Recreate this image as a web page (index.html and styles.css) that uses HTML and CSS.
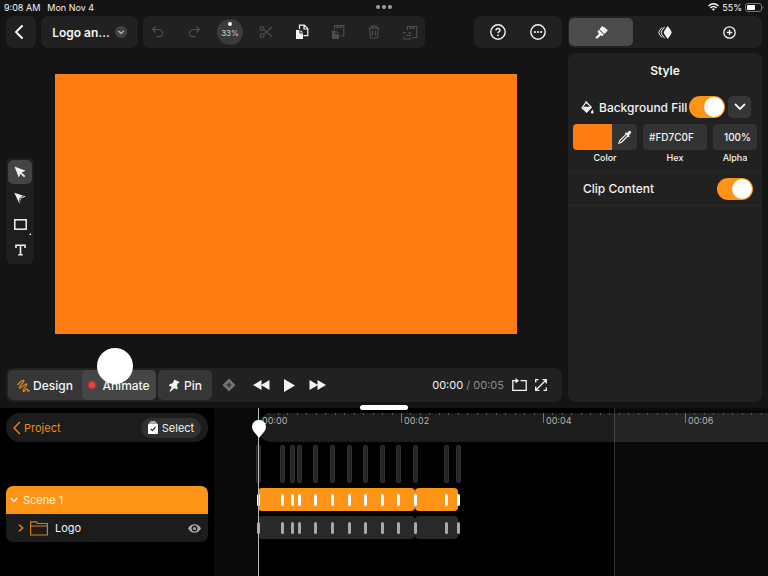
FILE: index.html
```html
<!DOCTYPE html>
<html lang="en">
<head>
  <meta charset="UTF-8" />
  <meta name="viewport" content="width=device-width, initial-scale=1.0"/>
  <title>Logo animation</title>

  <link rel="stylesheet" href="styles.css">
</head>
<body>

  <!-- Status bar -->
  <header class="status-bar">
    <div class="status-left"><span>9:08 AM</span><span>Mon Nov 4</span></div>
    <div class="dots"><i></i><i></i><i></i></div>
    <div class="status-right">
      <svg width="11" height="8" viewBox="0 0 11 8" fill="none" stroke="#fff" stroke-width="1.4">
        <path d="M.6 3Q5.500-1.400 10.400 3M2.400 5Q5.500 2.200 8.600 5"/>
        <path d="M5.500 7.800L3.900 6.100Q5.500 5 7.100 6.100Z" fill="#fff" stroke="none"/>
      </svg>
      <span>55%</span>
      <svg width="19" height="9" viewBox="0 0 19 9">
        <rect x=".5" y=".5" width="16" height="8" rx="2.500" fill="none" stroke="#77777a"/>
        <rect x="2" y="2" width="8" height="5" rx="1" fill="#fff"/>
        <path d="M17.600 3.200v2.800q1-.4 1-1.400t-1-1.400" fill="#77777a"/>
      </svg>
    </div>
  </header>

  <main class="editor">
    <section class="workspace">

      <!-- Toolbar -->
      <div class="toolbar">
        <button class="group back" aria-label="Back">
          <svg width="10" height="16" viewBox="0 0 10 16"><path d="M8 2L2 8l6 6" stroke-width="2" stroke-linecap="round" stroke-linejoin="round"/></svg>
        </button>
        <button class="group doc-title">
          <span>Logo an...</span>
          <svg width="12" height="12" viewBox="0 0 12 12"><circle cx="6" cy="6" r="6" fill="#434343" stroke="none"/><path d="M3.400 5L6 7.500 8.600 5" stroke="#bbb"/></svg>
        </button>
        <div class="group tools">
          <button class="dim" aria-label="Undo">
            <svg width="14" height="14" viewBox="0 0 14 14"><path d="M4.500 1.500L1.500 4.500l3 3M1.800 4.500H8a3.600 3.600 0 0 1 0 7.200H5.500"/></svg>
          </button>
          <button class="dim" aria-label="Redo">
            <svg width="14" height="14" viewBox="0 0 14 14"><path d="M9.500 1.500l3 3-3 3M12.200 4.500H6a3.600 3.600 0 0 0 0 7.200h2.500"/></svg>
          </button>
          <button class="zoom" aria-label="Zoom 33%"><i></i><span>33%</span></button>
          <button class="dim" aria-label="Cut">
            <svg width="14" height="14" viewBox="0 0 14 14"><circle cx="3" cy="3.500" r="1.900"/><circle cx="3" cy="10.500" r="1.900"/><path d="M4.600 4.600L12.800 11.500M4.600 9.400L12.800 2"/></svg>
          </button>
          <button aria-label="Copy">
            <svg width="14" height="16" viewBox="0 0 14 16"><path d="M4.500 5V1.200h4.800l3.500 3.500v7H8.500M9 1.500V5h3.500"/><path d="M1 6h3.500v3.500H8V15H1zM5.500 6L8 8.500H5.500z" fill="currentColor" stroke="none"/></svg>
          </button>
          <button class="dim" aria-label="Paste">
            <svg width="14" height="16" viewBox="0 0 14 16"><path d="M3.500 5V1.700h9.300V12H9M6 1.700v1.800h4V1.700"/><path d="M1 6.500h3.500V10H8v5H1zM5.500 6.500L8 9H5.500z" fill="currentColor" stroke="none"/></svg>
          </button>
          <button class="dim" aria-label="Delete">
            <svg width="12" height="14" viewBox="0 0 12 14"><path d="M.5 3.200h11M3.800 3V1.200h4.400V3M1.800 3.500l.7 9.500h7l.7-9.500M4.500 5.500v5.300M7.500 5.500v5.300"/></svg>
          </button>
          <button class="dim" aria-label="Paste in place">
            <svg width="15" height="15" viewBox="0 0 15 15"><path d="M4.500 5V1.500h9.300v11H9M7 1.500v1.800h4V1.500M1 9V7.500h1.500M5.500 7.500h1.500V10M1 11.500v2.500h6v-1.500M3 10.500h5"/></svg>
          </button>
        </div>
        <div class="group help">
          <button aria-label="Help">
            <svg width="16" height="16" viewBox="0 0 16 16"><circle cx="8" cy="8" r="7.200" stroke-width="1.400"/><path d="M6 6.500Q6 4.500 8 4.500t2 1.800Q10 7.200 8.800 7.800 8 8.300 8 9.300" stroke-width="1.400"/><circle cx="8" cy="11.300" r=".9" fill="currentColor" stroke="none"/></svg>
          </button>
          <button aria-label="More">
            <svg width="16" height="16" viewBox="0 0 16 16"><circle cx="8" cy="8" r="7.200" stroke-width="1.400"/><g fill="currentColor" stroke="none"><circle cx="4.900" cy="8" r="1.100"/><circle cx="8" cy="8" r="1.100"/><circle cx="11.100" cy="8" r="1.100"/></g></svg>
          </button>
        </div>
      </div>

      <!-- Canvas and drawing tools -->
      <div class="stage">
        <div class="palette">
          <button class="active" aria-label="Select">
            <svg width="12" height="12" viewBox="0 0 12 12"><path d="M.5.5l11 4.300-4 1.700L11.300 10 10 11.300 6.500 7.700 4.800 11.500z" fill="currentColor" stroke="none"/></svg>
          </button>
          <button aria-label="Edit points">
            <svg width="12" height="12" viewBox="0 0 12 12"><path d="M.3.700l11.400 3.800-4.700 2-1.700 5z" fill="currentColor" stroke="none"/><path d="M5.300 10Q4.800 5.500 10.500 3.500" stroke="#1e1e1e" stroke-width=".8"/></svg>
          </button>
          <button class="shape" aria-label="Rectangle">
            <svg width="13" height="11" viewBox="0 0 13 11"><rect x=".8" y=".8" width="11.400" height="9.400" stroke-width="1.500"/></svg>
          </button>
          <button aria-label="Text">
            <svg width="11" height="12" viewBox="0 0 11 12"><path d="M1 4V1.200h9V4M5.500 1.200v9.600M3.300 10.800h4.400" stroke-width="1.600"/></svg>
          </button>
        </div>
        <div class="canvas"></div>
      </div>

      <!-- Playback -->
      <div class="group playback">
        <div class="modes">
          <button class="mode">
            <svg width="13" height="13" viewBox="0 0 13 13"><path d="M.8 5.500C3 3 6 .6 6.800 1.500 7.800 2.700 1.500 7.500 2.500 9c1 1.300 5.800-5 7.200-4 1.300 1.200-4.700 5.500-3.600 7 .9 1.200 3-2.500 4.300-2 .9.400-.2 2 .6 2.200.5.100.9-.3 1.200-.7" stroke="#d8871d" stroke-width="1.300" stroke-linecap="round" stroke-linejoin="round"/></svg>
            Design
          </button>
          <button class="mode active"><i class="record"></i>Animate<span class="touch"></span></button>
        </div>
        <button class="mode pin">
          <svg width="12" height="13" viewBox="0 0 12 13"><path d="M6.300.500l5.200 2.600-.6 1.100-.9-.3-1.100 2.600q1.500 1.800.3 4L6.300 9.300 2.300 12.800l-.8-.6 2.400-4.200L.7 6.500q1.400-2.200 3.500-2L5.900 1.800z" fill="currentColor" stroke="none"/></svg>
          Pin
        </button>
        <button class="key" aria-label="Add keyframe">
          <svg width="14" height="14" viewBox="0 0 14 14"><path d="M7 .5L13.500 7 7 13.500.5 7z" fill="#747474" stroke="none"/><path d="M7 4.500v5M4.500 7h5" stroke="#222"/></svg>
        </button>
        <button class="rewind" aria-label="Rewind"><svg width="17" height="10" viewBox="0 0 17 10"><path d="M8.500 0v10L0 5zM16.500 0v10L8 5z" fill="currentColor" stroke="none"/></svg></button>
        <button class="play" aria-label="Play"><svg width="11" height="13" viewBox="0 0 11 13"><path d="M0 0l11 6.500L0 13z" fill="currentColor" stroke="none"/></svg></button>
        <button class="forward" aria-label="Forward"><svg width="17" height="10" viewBox="0 0 17 10"><path d="M.5 0v10L9 5zM8.500 0v10L17 5z" fill="currentColor" stroke="none"/></svg></button>
        <div class="time">00:00 <span>/ 00:05</span></div>
        <button class="loop" aria-label="Loop"><svg width="15" height="14" viewBox="0 0 15 14"><path d="M4.500 2.700H.8v9.600h13.400V2.700H8.500" stroke-width="1.300"/><path d="M3.500 0L7 2.700 3.500 5.400z" fill="currentColor" stroke="none"/></svg></button>
        <button class="expand" aria-label="Full screen"><svg width="12" height="12" viewBox="0 0 12 12"><path d="M7.500.7h3.800v3.800M11.300.7L.7 11.300M.7 7.500v3.800h3.800M.7 3.500V.7h2.800M11.300 8.500v2.800H8.500" stroke-width="1.300"/></svg></button>
      </div>
    </section>

    <!-- Inspector -->
    <aside class="sidebar">
      <div class="group tabs">
        <button class="active" aria-label="Style">
          <svg width="13" height="13" viewBox="0 0 13 13"><path d="M7.200 0l1.500 1.600 1-.4L12.800 4.500 9.300 8 4.500 3.200zM3.800 3.800l5 5-1.200 1.300-1.800-.8-3.300 3.200q-1.600.5-2-1.200L4 7.700 2.500 5.800z" fill="currentColor" stroke="none"/></svg>
        </button>
        <button aria-label="Motion">
          <svg width="14" height="13" viewBox="0 0 14 13"><path d="M9.700 0q3.300 3.800 4 6.500-.7 2.700-4 6.500-3.200-3.800-3.900-6.500.7-2.700 3.900-6.500z" fill="currentColor" stroke="none"/><path d="M6.700.8Q3.300 4.500 3.200 6.500t3.500 5.700M4 1.500Q.9 4.700.8 6.500T4 11.500" stroke-width="1"/></svg>
        </button>
        <button aria-label="Add">
          <svg width="13" height="13" viewBox="0 0 13 13"><circle cx="6.500" cy="6.500" r="5.700" stroke-width="1.300"/><path d="M6.500 3.800v5.400M3.800 6.500h5.400" stroke-width="1.300"/></svg>
        </button>
      </div>

      <div class="panel">
        <h1>Style</h1>
        <div class="fill">
          <div class="fill-head">
            <svg width="13" height="13" viewBox="0 0 13 13"><path d="M5.200 1L1 6.800l4.700 4.300 4.600-4.800zM2.600 6.300h7M4.500.500L7 3"/><path d="M1.600 6.500h8.300l-4.200 4.300zM11.300 8.500q2 2.700.9 3.700-1.100.7-1.900 0-.9-1 1-3.700z" fill="currentColor" stroke="none"/></svg>
            <label for="fill">Background Fill</label>
            <input type="checkbox" class="switch" id="fill" checked>
            <button class="more" aria-label="Fill options">
              <svg width="12" height="8" viewBox="0 0 12 8"><path d="M1.500 1.500L6 6l4.500-4.500" stroke-width="1.800" stroke-linecap="round"/></svg>
            </button>
          </div>
          <div class="fields">
            <div class="field">
              <div class="color-box">
                <button class="swatch" id="color" aria-label="Color"></button>
                <button class="dropper" aria-label="Pick color">
                  <svg width="14" height="14" viewBox="0 0 14 14"><path d="M8 4.300L1.800 10.500l-.8 2.500 2.500-.8L9.700 6"/><path d="M6.800 3.300l1-1 1 .9L11 1q1-.6 1.700.3.800.8.300 1.700L10.800 5.200l.9 1-1 1z" fill="currentColor" stroke="none"/></svg>
                </button>
              </div>
              <label for="color">Color</label>
            </div>
            <div class="field">
              <input type="text" id="hex" value="#FD7C0F">
              <label for="hex">Hex</label>
            </div>
            <div class="field">
              <input type="text" class="alpha" id="alpha" value="100%">
              <label for="alpha">Alpha</label>
            </div>
          </div>
        </div>
        <div class="clip">
          <label for="clip">Clip Content</label>
          <input type="checkbox" class="switch" id="clip" checked>
        </div>
      </div>
    </aside>
  </main>

  <!-- Timeline -->
  <section class="timeline">
    <span class="handle"></span>
    <div class="layers">
      <div class="layers-head">
        <a href="#">
          <svg width="8" height="14" viewBox="0 0 8 14" fill="none" stroke="currentColor" stroke-width="1.300"><path d="M7 1L1 7l6 6"/></svg>
          Project
        </a>
        <button class="select">
          <svg width="10" height="13" viewBox="0 0 10 13"><path d="M2.500 0h5v1.500h1.700V3H.8V1.500h1.700z" fill="#aaa" stroke="none"/><rect y="3" width="10" height="10" rx="1" fill="#fff" stroke="none"/><path d="M2.800 8l1.700 1.700L7.500 6" stroke="#333"/></svg>
          Select
        </button>
      </div>
      <ul class="layer-list">
        <li class="scene">
          <svg width="8" height="6" viewBox="0 0 8 6" fill="none" stroke="#fff" stroke-width="1.200"><path d="M.8 1L4 4.500 7.200 1"/></svg>
          Scene 1
        </li>
        <li class="layer">
          <svg width="6" height="8" viewBox="0 0 6 8" fill="none" stroke="#f79518" stroke-width="1.200"><path d="M1 .8L4.800 4 1 7.200"/></svg>
          <svg width="18" height="15" viewBox="0 0 18 15" fill="none" stroke="#d27f18" stroke-width="1.200"><path d="M.6 14V.8h5.600l1.500 1.700h9.700V14zM.6 5h16.800"/></svg>
          <span>Logo</span>
          <svg class="eye" width="13" height="9" viewBox="0 0 13 9"><path d="M0 4.500Q2.500.3 6.500.3T13 4.500Q10.500 8.700 6.500 8.700T0 4.500z" fill="#a8a8aa"/><circle cx="6.500" cy="4.500" r="2.900" fill="#1c1c1c"/><circle cx="6.500" cy="4.500" r="1.600" fill="#a8a8aa"/></svg>
        </li>
      </ul>
    </div>

    <div class="tracks">
      <div class="past-end"></div>
      <div class="ruler" id="ruler"></div>
      <div class="row guides"></div>
      <div class="row clips scene-clips"><span class="clip-long"></span><span class="clip-short"></span></div>
      <div class="row clips layer-clips"><span class="clip-long"></span><span class="clip-short"></span></div>
      <div class="playhead">
        <svg width="14" height="18" viewBox="0 0 14 18"><path d="M7 18L1.700 11.500A7 7 0 1 1 12.300 11.500z" fill="#fff"/></svg>
      </div>
    </div>
  </section>

  <script src="script.js"></script>
</body>
</html>
```

FILE: styles.css
```css
/* Reset & Base */
* {
  margin: 0;
  padding: 0;
  box-sizing: border-box;
}

body {
  display: flex;
  flex-direction: column;
  min-height: 100vh;
  font-family: Inter, "Liberation Sans", sans-serif;
  font-size: 12px;
  background-color: #141414;
  color: #f4f4f4;
  overflow: hidden;
}

button,
input {
  font: inherit;
  color: inherit;
  border: none;
  background: none;
}

button {
  display: flex;
  align-items: center;
  justify-content: center;
  cursor: pointer;
}

svg {
  display: block;
  flex: none;
}

button svg,
.fill-head svg {
  fill: none;
  stroke: currentColor;
  stroke-width: 1.2;
}

/* Status bar */
.status-bar {
  display: grid;
  grid-template-columns: 1fr auto 1fr;
  align-items: center;
  height: 16px;
  padding: 0 4px 2px;
  font-size: 9px;
}

.status-left {
  display: flex;
  gap: 7px;
}

.status-right {
  display: flex;
  justify-content: flex-end;
  align-items: center;
  gap: 3px;
}

.dots {
  display: flex;
  gap: 2px;
}

.dots i {
  width: 4px;
  height: 4px;
  border-radius: 50%;
  background-color: #a0a0a0;
}

/* Editor */
.editor {
  flex: 1;
  display: grid;
  grid-template-columns: minmax(0, 1fr) 194px;
  gap: 6px;
  padding: 0 6px 6px;
}

.workspace,
.sidebar {
  display: flex;
  flex-direction: column;
}

.group {
  background-color: #212121;
  border-radius: 7px;
}

.toolbar {
  display: flex;
  gap: 5px;
  height: 32px;
}

.back {
  width: 30px;
  padding-right: 4px;
}

.doc-title {
  width: 97px;
  gap: 5px;
  font-weight: 600;
}

.tools {
  display: flex;
  align-items: center;
  gap: 10px;
  padding: 0 2px;
}

.tools button {
  width: 26px;
  height: 26px;
}

.dim {
  color: #4d4d4d;
}

.zoom {
  flex-direction: column;
  gap: 2px;
  font-size: 8px;
  line-height: 10px;
  border-radius: 50%;
  background-color: #3b3b3b;
}

.tools .zoom {
  padding-bottom: 4px;
}

.zoom i {
  width: 4px;
  height: 4px;
  border-radius: 50%;
  background-color: #fff;
}

.zoom span {
  color: #d0d0d0;
}

.help {
  display: flex;
  margin-left: auto;
  padding: 0 4px;
}

.help button {
  width: 40px;
}

/* Stage */
.stage {
  flex: 1;
  display: flex;
  align-items: center;
  gap: 21px;
  padding: 26px 45px 34px 0;
}

.palette {
  margin-top: 14px;
  padding: 2px;
  border-radius: 6px;
  background-color: #1e1e1e;
}

.palette button {
  position: relative;
  width: 24px;
  height: 24px;
  margin-bottom: 2px;
  border-radius: 5px;
}

.palette button:last-child {
  margin-bottom: 0;
}

.palette .active {
  background-color: #444;
}

.shape::after {
  content: "";
  position: absolute;
  right: 1px;
  bottom: 1px;
  border: 1px solid #fff;
  border-top-color: transparent;
  border-left-color: transparent;
}

.canvas {
  flex: 1;
  aspect-ratio: 462 / 260;
  background-color: #ff7d10;
}

/* Playback */
.playback {
  display: flex;
  align-items: center;
  height: 34px;
  padding: 2px 15px 2px 2px;
}

.modes {
  display: flex;
  border-radius: 5px;
  background-color: #363636;
}

.mode {
  position: relative;
  width: 74px;
  height: 30px;
  gap: 3px;
  border-radius: 5px;
  font-weight: 500;
}

.mode.active {
  background-color: #464646;
}

.record {
  width: 8px;
  height: 8px;
  margin-right: 3px;
  border-radius: 50%;
  background: radial-gradient(#f2403e 35%, #a03a39 70%);
  box-shadow: 0 0 4px #8d3837;
}

.touch {
  position: absolute;
  left: 15px;
  bottom: 16px;
  width: 36px;
  height: 36px;
  border-radius: 50%;
  background-color: #fff;
}

.pin {
  width: 54px;
  margin-left: 2px;
  gap: 4px;
  background-color: #363636;
}

.key {
  margin-left: 10px;
}

.rewind {
  margin-left: 17px;
}

.play,
.forward {
  margin-left: 14px;
}

.time {
  margin-left: auto;
  font-size: 11px;
}

.time span {
  color: #8e8e8e;
}

.loop,
.expand {
  margin-left: 8px;
}

/* Sidebar */
.sidebar {
  gap: 5px;
}

.tabs {
  display: flex;
  height: 32px;
  padding: 2px 1px;
}

.tabs button {
  flex: 1;
  border-radius: 5px;
}

.tabs .active {
  background-color: #4b4b4b;
}

.panel {
  flex: 1;
  border-radius: 7px;
  background-color: #212121;
}

.panel h1 {
  padding-top: 10px;
  font-size: 12px;
  line-height: 16px;
  font-weight: 600;
  text-align: center;
}

.fill {
  padding: 17px 5px 5px;
  border-bottom: 1px solid #292929;
}

.fill-head {
  display: flex;
  align-items: center;
  padding: 0 6px 0 8px;
  font-weight: 500;
}

.fill-head label {
  margin-left: 5px;
  white-space: nowrap;
}

.fill-head .switch {
  margin-left: auto;
}

.switch {
  flex: none;
  appearance: none;
  width: 36px;
  height: 22px;
  border-radius: 11px;
  background-color: #555;
  cursor: pointer;
}

.switch::before {
  content: "";
  display: block;
  width: 20px;
  height: 20px;
  margin: 1px;
  border-radius: 50%;
  background-color: #fff;
}

.switch:checked {
  background-color: #fd9416;
}

.switch:checked::before {
  margin-left: 15px;
}

.more {
  width: 23px;
  height: 22px;
  margin-left: 3px;
  border-radius: 5px;
  background-color: #363636;
}

.fields {
  display: grid;
  grid-template-columns: 64px 64px 1fr;
  gap: 6px;
  margin-top: 6px;
}

.field input,
.color-box {
  display: flex;
  width: 100%;
  height: 26px;
  border-radius: 4px;
  background-color: #333;
  overflow: hidden;
}

.field input {
  padding: 0 6px;
  font-size: 10px;
  font-weight: 500;
}

.field .alpha {
  text-align: right;
}

.swatch {
  width: 39px;
  background-color: #ff7d10;
}

.dropper {
  flex: 1;
}

.field label {
  display: block;
  font-size: 9px;
  line-height: 16px;
  font-weight: 500;
  text-align: center;
}

.clip {
  display: flex;
  align-items: center;
  justify-content: space-between;
  height: 34px;
  padding: 0 9px 0 15px;
  border-bottom: 1px solid #292929;
  font-weight: 500;
}

/* Timeline */
.timeline {
  position: relative;
  display: grid;
  grid-template-columns: 214px minmax(0, 1fr);
  min-height: 168px;
  background-color: #000;
}

.handle {
  position: absolute;
  top: -3px;
  left: 50%;
  width: 48px;
  height: 5px;
  margin-left: -24px;
  border-radius: 3px;
  background-color: #fff;
}

.layers {
  padding: 5px 6px;
}

.layers-head {
  display: flex;
  align-items: center;
  justify-content: space-between;
  height: 29px;
  padding: 0 7px;
  border-radius: 14px;
  background-color: #1c1c1c;
  font-size: 11px;
}

.layers-head a {
  display: flex;
  align-items: center;
  gap: 3px;
  color: #f08c18;
  text-decoration: none;
}

.select {
  width: 60px;
  height: 20px;
  gap: 4px;
  border-radius: 10px;
  background-color: #303030;
}

.layer-list {
  margin-top: 44px;
  border-radius: 7px;
  overflow: hidden;
  list-style: none;
  font-size: 11px;
}

.layer-list li {
  display: flex;
  align-items: center;
  height: 28px;
}

.scene {
  gap: 5px;
  padding-left: 4px;
  background-color: #fd9416;
  color: #fff2dc;
}

.layer {
  gap: 6px;
  padding: 0 7px 0 12px;
  background-color: #1c1c1c;
}

.layer span {
  margin-left: 1px;
}

.eye {
  margin-left: auto;
}

.tracks {
  position: relative;
  padding-top: 5px;
  border-left: 44px solid #0a0a0a;
}

.past-end {
  position: absolute;
  top: 0;
  bottom: 0;
  left: 356px;
  right: 0;
  border-left: 1px solid #303030;
  background-color: rgba(255, 255, 255, 0.04);
}

.ruler {
  position: relative;
  height: 29px;
  border-radius: 14px 0 0 14px;
  background-color: rgba(255, 255, 255, 0.11);
  overflow: hidden;
}

.tick {
  position: absolute;
  top: 0;
  height: 2px;
  border-left: 1px solid #555;
}

.tick.major {
  height: 10px;
  padding: 2px 0 0 2px;
  border-color: #777;
  color: #b4b4b4;
  font-size: 9px;
  line-height: 12px;
}

.row {
  position: relative;
}

.row i {
  position: absolute;
  width: 3px;
  border-radius: 2px;
}

.guides {
  height: 38px;
  margin: 3px 0 5px;
}

.guides i {
  top: 0;
  width: 5px;
  height: 38px;
  margin-left: -2px;
  border: 1px solid #303030;
  background-color: #252525;
}

.clips {
  display: flex;
  height: 23px;
  margin-bottom: 5px;
}

.clips i {
  top: 6px;
  height: 12px;
  margin-left: -1px;
}

.clips span {
  border-radius: 4px;
}

.clip-long {
  width: 157px;
}

.clip-short {
  width: 43px;
}

.scene-clips span {
  background-color: #fd9416;
}

.scene-clips i {
  background-color: #fff;
}

.layer-clips span {
  background-color: #292929;
}

.layer-clips i {
  background-color: #a8a8a8;
}

.playhead {
  position: absolute;
  top: 0;
  bottom: 0;
  left: 0;
  width: 1px;
  background-color: #b8b8b8;
}

.playhead svg {
  position: absolute;
  top: 12px;
  left: -6px;
}
```

FILE: script.js
```javascript
// Ruler scale: 142px for two seconds, 15 small ticks between labels
const scale = 142;
const ruler = document.getElementById("ruler");

for (let i = 0; i < 55; i++) {
  const tick = document.createElement("span");
  tick.className = "tick";
  tick.style.left = Math.round(i * scale / 15) + 1 + "px";
  if (i % 15 === 0) {
    tick.classList.add("major");
    tick.textContent = "00:0" + (i / 15) * 2;
  }
  ruler.appendChild(tick);
}

// Keyframe positions, shared by all rows
const keyframes = [0, 24, 34, 41, 57, 74, 91, 107, 124, 140, 157, 188, 200];

document.querySelectorAll(".row").forEach(row => {
  keyframes.forEach(x => {
    const key = document.createElement("i");
    key.style.left = x + "px";
    row.appendChild(key);
  });
});
```
